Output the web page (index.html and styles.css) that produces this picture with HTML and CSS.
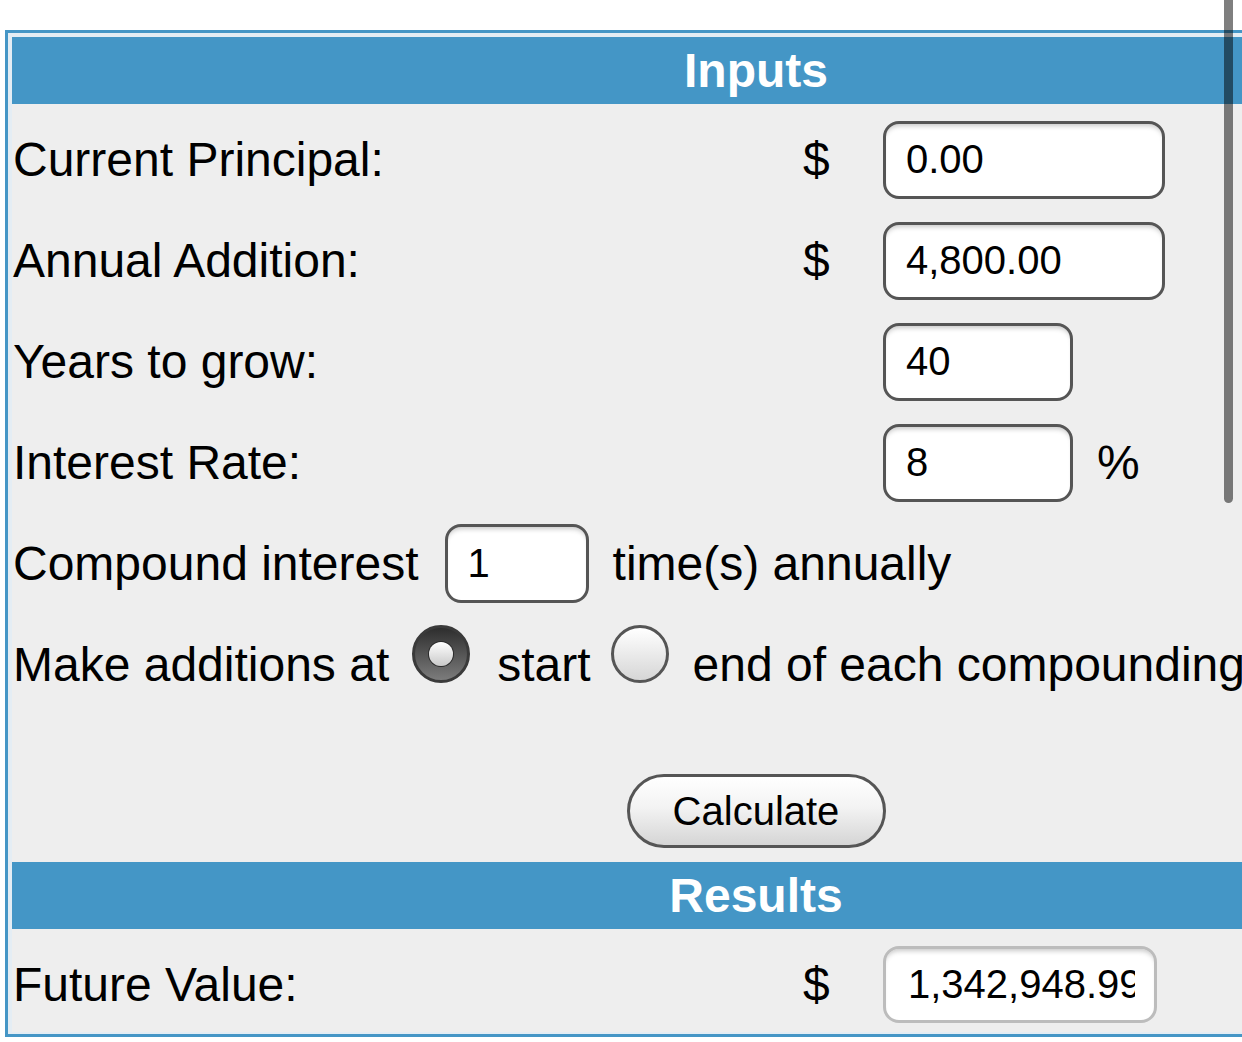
FILE: index.html
```html
<!DOCTYPE html>
<html>
<head>
<meta charset="utf-8">
<title>Compound Interest Calculator</title>
<link rel="stylesheet" href="styles.css">
</head>
<body>
<div class="frame">
  <div class="panel">
    <div class="head">Inputs</div>
    <div class="inputs">
      <div class="row">
        <span class="label">Current Principal:</span>
        <span class="cur">$</span>
        <input class="field wide" type="text" value="0.00">
      </div>
      <div class="row">
        <span class="label">Annual Addition:</span>
        <span class="cur">$</span>
        <input class="field wide" type="text" value="4,800.00">
      </div>
      <div class="row">
        <span class="label">Years to grow:</span>
        <span class="cur"></span>
        <input class="field short" type="text" value="40">
      </div>
      <div class="row">
        <span class="label">Interest Rate:</span>
        <span class="cur"></span>
        <input class="field short" type="text" value="8">
        <span class="pct">%</span>
      </div>
      <div class="row row-compound">
        <span>Compound interest</span>
        <input class="field tiny" type="text" value="1">
        <span>time(s) annually</span>
      </div>
      <div class="row row-radio">
        <span>Make additions at</span>
        <span class="radio on first"><span class="dot"></span></span>
        <span class="opt-start">start</span>
        <span class="radio off second"></span>
        <span class="opt-end">end of each compounding period</span>
      </div>
      <div class="actions">
        <button class="calc" type="button">Calculate</button>
      </div>
    </div>
    <div class="head">Results</div>
    <div class="results">
      <div class="row row-result">
        <span class="label">Future Value:</span>
        <span class="cur">$</span>
        <input class="field result" type="text" value="1,342,948.99" readonly>
      </div>
    </div>
  </div>
</div>
<div class="scrollbar"></div>
</body>
</html>
```

FILE: styles.css
```css
html, body {
  margin: 0;
  padding: 0;
  overflow: hidden;
  background: #ffffff;
}

body {
  font-family: "Liberation Sans", Arial, Helvetica, sans-serif;
  color: #000;
  width: 1242px;
  height: 1042px;
}

.frame {
  margin: 30px 0 0 5px;
  width: 1488px;
  border: 3px solid #4596c6;
  padding: 4px 4px 2px 4px;
  background: #e4edf4;
}

.panel {
  width: 1488px;
}

.head {
  height: 67px;
  line-height: 67px;
  background: #4496c6;
  color: #fff;
  font-weight: bold;
  font-size: 48px;
  text-align: center;
}

.inputs {
  background: #eeeeee;
  padding-top: 5px;
}

.row {
  display: flex;
  align-items: center;
  height: 101px;
  padding-left: 1px;
  font-size: 48px;
  white-space: nowrap;
}

.label {
  width: 790px;
  flex: none;
}

.cur {
  width: 80px;
  flex: none;
}

.field {
  display: block;
  flex: none;
  box-sizing: border-box;
  height: 78px;
  margin: 0;
  border: 3px solid #555555;
  border-radius: 16px;
  background: #ffffff;
  box-shadow: inset 0 5px 5px -3px rgba(0, 0, 0, 0.22);
  font-family: "Liberation Sans", Arial, Helvetica, sans-serif;
  font-size: 40px;
  color: #000;
  padding: 0 0 0 20px;
  outline: none;
}

.wide {
  width: 282px;
}

.short {
  width: 190px;
}

.tiny {
  width: 144px;
  height: 79px;
  margin: 0 24px 0 26px;
}

.pct {
  margin-left: 24px;
}

.row-compound {
  height: 100px;
}

.row-radio {
  height: 102px;
}

.radio {
  flex: none;
  box-sizing: border-box;
  width: 58px;
  height: 58px;
  border-radius: 50%;
  margin-bottom: 20px;
  display: flex;
  align-items: center;
  justify-content: center;
}

.radio.on {
  border: 3px solid #3a3a3a;
  background: linear-gradient(#2e2e2e, #7c7c7c);
}

.radio.on .dot {
  width: 24px;
  height: 24px;
  border-radius: 50%;
  background: linear-gradient(#ffffff, #c9c9c9);
  box-shadow: 0 0 0 1px #2a2a2a;
}

.radio.off {
  border: 3px solid #555555;
  background: linear-gradient(#ffffff, #d6d6d6);
}

.first {
  margin-left: 23px;
}

.opt-start {
  margin-left: 27px;
}

.second {
  margin-left: 20px;
}

.opt-end {
  margin-left: 24px;
}

.actions {
  padding: 59px 0 14px 0;
  display: flex;
  justify-content: center;
}

.calc {
  box-sizing: border-box;
  width: 259px;
  height: 74px;
  margin: 0;
  padding: 0;
  border: 3px solid #555555;
  border-radius: 37px;
  background: linear-gradient(#ffffff 0%, #f3f3f3 45%, #d5d5d5 100%);
  font-family: "Liberation Sans", Arial, Helvetica, sans-serif;
  font-size: 40px;
  color: #000;
}

.results {
  background: #eeeeee;
  padding: 17px 0 9px 0;
}

.row-result {
  height: 77px;
}

.result {
  width: 274px;
  height: 77px;
  border-color: #bcbcbc;
  padding: 0 19px 0 22px;
}

.scrollbar {
  position: fixed;
  left: 1224px;
  top: -10px;
  width: 9px;
  height: 513px;
  border-radius: 5px;
  background: rgba(0, 0, 0, 0.5);
}
```
